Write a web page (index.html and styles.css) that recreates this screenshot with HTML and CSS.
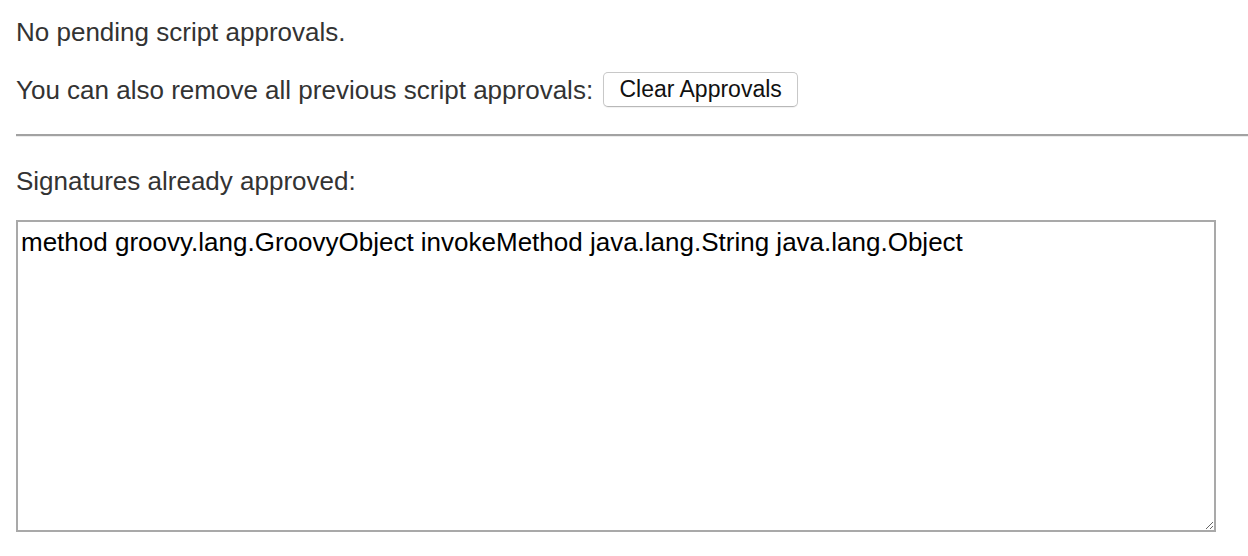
FILE: index.html
```html
<!DOCTYPE html>
<html>
<head>
<meta charset="utf-8">
<link rel="stylesheet" href="styles.css">
</head>
<body>
<div class="page">
  <p class="msg first">No pending script approvals.</p>
  <div class="msg clear-row">
    <span>You can also remove all previous script approvals:</span>
    <button class="btn" type="button">Clear Approvals</button>
  </div>
  <hr class="rule">
  <p class="msg label">Signatures already approved:</p>
  <textarea class="sigs" readonly>method groovy.lang.GroovyObject invokeMethod java.lang.String java.lang.Object</textarea>
</div>
</body>
</html>
```

FILE: styles.css
```css
html, body {
  margin: 0;
  padding: 0;
  background: #fff;
}
.page {
  padding: 17px 0 0 16px;
  font-family: "Liberation Sans", Arial, Helvetica, sans-serif;
  color: #333;
  font-size: 26px;
}
.msg {
  margin: 0;
  line-height: 30px;
}
.clear-row {
  margin-top: 25px;
  display: flex;
  align-items: center;
  gap: 10px;
  height: 35px;
}
.btn {
  font-family: "Liberation Sans", Arial, Helvetica, sans-serif;
  font-size: 23px;
  color: #111;
  background: #fff;
  border: 1px solid #c8c8c8;
  border-bottom-color: #b8b8b8;
  border-radius: 5px;
  height: 35px;
  width: 195px;
  padding: 0;
  box-shadow: 0 1px 1px rgba(0,0,0,0.06);
}
.rule {
  margin: 27px 0 0 0;
  height: 0;
  border: 0;
  border-top: 2px solid #a2a2a2;
  border-bottom: 1px solid #ececec;
}
.label {
  margin-top: 29px;
}
.sigs {
  display: block;
  margin: 24px 0 0 0;
  box-sizing: border-box;
  width: 1200px;
  height: 312px;
  border: 2px solid #a9a9a9;
  padding: 5px 2px 5px 3px;
  font-family: "Liberation Sans", Arial, Helvetica, sans-serif;
  font-size: 26px;
  line-height: 30px;
  color: #000;
  background: #fff;
  outline: none;
}
```
